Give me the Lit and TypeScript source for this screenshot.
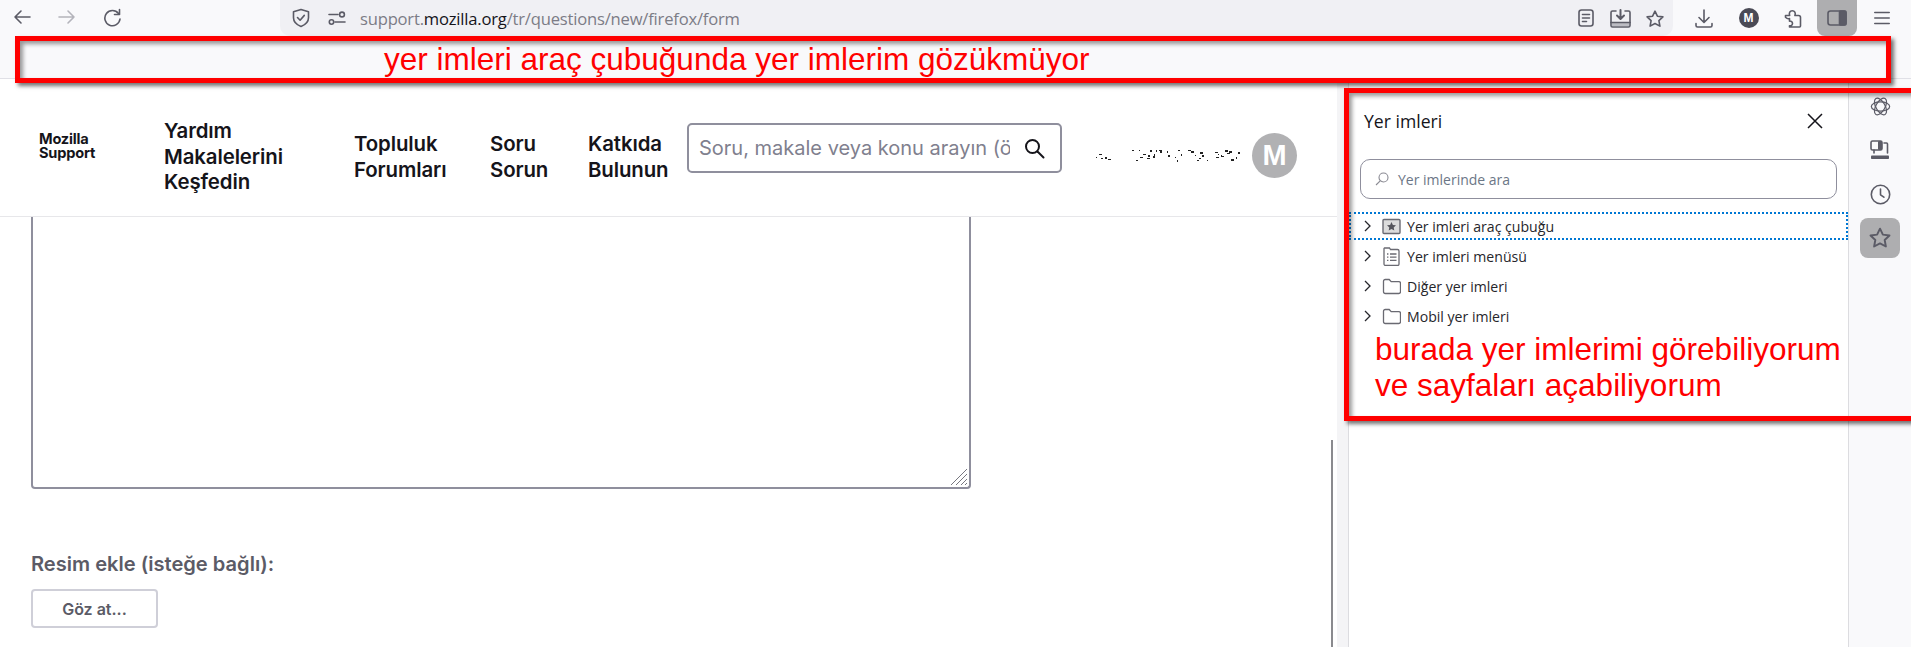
import { LitElement, html, css, svg } from "lit";
import { customElement } from "lit/decorators.js";

const ic = "fill:none;stroke:currentColor;stroke-width:1.6;stroke-linecap:round;stroke-linejoin:round";
const icon = (w: number, h: number, vb: string, body: unknown) =>
  html`<svg width=${w} height=${h} viewBox=${vb} style=${ic}>${body}</svg>`;

const STAR = "M10 2.2l2.4 5 5.5.7-4 3.8 1 5.4-4.9-2.6-4.9 2.6 1-5.4-4-3.8 5.5-.7z";
const FOLDER = "M1.5 4.2a1.7 1.7 0 0 1 1.7-1.7h4l2 2.2h7.6a1.7 1.7 0 0 1 1.7 1.7v8.4a1.7 1.7 0 0 1-1.7 1.7H3.2a1.7 1.7 0 0 1-1.7-1.7z";

const specks: [number, number, number, number][] = (() => {
  const out: [number, number, number, number][] = [];
  let s = 7;
  const r = () => ((s = (s * 137 + 59) % 1009) / 1009);
  for (let x = 0; x < 148; x += 2) {
    if (x > 16 && x < 40) continue;
    if (r() < 0.35) continue;
    out.push([x + Math.floor(r() * 2), 2 + Math.floor(r() * 11), 1 + Math.floor(r() * 3), 1 + Math.floor(r() * 2)]);
  }
  return out;
})();

@customElement("app-root")
export class AppRoot extends LitElement {
  static styles = css`
    :host { display: block; width: 1911px; height: 647px; overflow: hidden; position: relative; background: #fff; font-family: "Inter", "Liberation Sans", sans-serif; }
    .toolbar { height: 78px; background: #f9f9fb; border-bottom: 1px solid #e0e0e6; box-sizing: content-box; color: #5b5b66; }
    .navrow { height: 36px; display: flex; align-items: stretch; }
    .navbtns { width: 280px; display: flex; align-items: center; padding: 0 0 2px 13px; gap: 27px; box-sizing: border-box; }
    .navbtns svg { display: block; }
    .muted { color: #b4b4bb; }
    .urlbar { width: 1393px; background: #f0f0f4; border-radius: 0 0 10px 10px; display: flex; align-items: center; padding-left: 12px; box-sizing: border-box; }
    .perm { margin-left: 18px; display: flex; }
    .url { margin-left: 14px; font-family: "Open Sans", sans-serif; font-size: 16.6px; letter-spacing: -0.2px; color: #7c7c86; white-space: nowrap; }
    .url b { font-weight: 400; color: #15141a; }
    .urlicons { margin-left: auto; display: flex; align-items: center; gap: 14px; padding-right: 8px; }
    .reader { display: flex; margin-right: 2px; }
    .tools { flex: 1; display: flex; align-items: center; padding-left: 8px; }
    .tool { width: 45px; display: flex; justify-content: center; align-items: center; height: 36px; }
    .tool.puzzle { width: 43px; }
    .tool.active { width: 40px; margin: 0 3px; background: #aeaeb0; border-radius: 0 0 8px 8px; }
    .tool.menu { margin-left: 0; width: 44px; }
    .acct { width: 20px; height: 20px; border-radius: 50%; background: #4a4a55; color: #fff; font: 700 12px "Liberation Sans", sans-serif; display: flex; align-items: center; justify-content: center; }

    .body { display: flex; height: 568px; }
    .page { width: 1337px; flex: none; position: relative; }
    .head { height: 137px; border-bottom: 1px solid #e7e7ea; display: grid; grid-template-columns: 125px 190px 136px 98px 99px 375px 1fr; padding-left: 39px; box-sizing: content-box; align-items: start; }
    .logo { margin-top: 53px; font: 700 14.6px/14px "Inter", sans-serif; color: #15141a; letter-spacing: -0.2px; }
    .nav { font-size: 20.4px; line-height: 25.5px; font-weight: 600; color: #15141a; height: 77px; display: flex; align-items: center; margin-top: 39px; letter-spacing: -0.1px; }
    .search { margin-top: 44px; height: 50px; border: 2px solid #8f8f9d; border-radius: 5px; box-sizing: border-box; display: flex; align-items: center; padding: 0 15px 0 10px; color: #15141a; }
    .ph { width: 311px; overflow: hidden; white-space: nowrap; font-size: 20px; color: #80808e; }
    .search svg { margin-left: auto; }
    .user { display: flex; align-items: flex-start; margin-top: 54px; padding-left: 30px; }
    .blur { margin-top: 15px; display: block; }
    .avatar { margin-left: 12px; width: 45px; height: 45px; border-radius: 50%; background: #b1b1b3; color: #fff; font: 700 29px "Liberation Sans", sans-serif; display: flex; align-items: center; justify-content: center; }
    .content { padding-left: 31px; height: 430px; position: relative; }
    .ta { width: 940px; height: 272px; box-sizing: border-box; border: 2px solid #8f8f9d; border-top: none; border-radius: 0 0 4px 4px; display: flex; align-items: flex-end; justify-content: flex-end; padding: 0 1px 1px 0; }
    .ta svg { display: block; }
    .label { margin-top: 63px; font-size: 20.1px; line-height: 24px; font-weight: 600; color: #5b5b66; }
    .btn { margin-top: 13px; width: 127px; height: 39px; box-sizing: border-box; border: 2px solid #cfcfd8; border-radius: 4px; display: flex; align-items: center; justify-content: center; font-size: 16px; font-weight: 600; color: #5b5b66; }
    .scroll { position: absolute; left: 1331px; top: 361px; bottom: 0; width: 2px; background: #8a8a8e; }

    .gutter { width: 11px; flex: none; background: #f4f4f6; border-right: 1px solid #dcdce0; }
    .side { width: 499px; flex: none; background: #fff; font-family: "Open Sans", sans-serif; color: #15141a; position: relative; padding-top: 11px; box-sizing: border-box; }
    .stitle { display: flex; align-items: center; justify-content: space-between; height: 61px; padding: 0 25px 0 15px; font-size: 17.6px; font-weight: 500; box-sizing: border-box; }
    .sbox { margin: 8px 11px 0 11px; height: 40px; border: 1px solid #8f8f9d; border-radius: 10px; display: flex; align-items: center; padding-left: 14px; box-sizing: border-box; font-size: 14px; color: #6b7686; gap: 9px; }
    .rows { margin-top: 13px; }
    .row { height: 30px; display: flex; align-items: center; font-size: 14.1px; padding-left: 15px; box-sizing: border-box; color: #26262b; }
    .row.first { height: 28px; margin-bottom: 1px; outline: 2px dotted #0078d4; outline-offset: -2px; }
    .row .chev { width: 18px; display: block; }
    .row .ico { width: 19px; height: 19px; margin-right: 6px; color: #6a6a72; display: block; }
    .note { margin: 0 0 0 26px; font: 31.5px/36px "Liberation Sans", sans-serif; color: #ff0000; white-space: nowrap; }
    .strip { width: 63px; flex: none; background: #f9f9fb; border-left: 1px solid #dcdce0; box-sizing: border-box; display: flex; flex-direction: column; align-items: center; color: #5b5b66; padding-top: 7px; }
    .sb { width: 40px; height: 40px; margin-bottom: 4px; display: flex; align-items: center; justify-content: center; }
    .sb.active { background: #aeaeb0; border-radius: 8px; }

    .mark { position: absolute; box-sizing: border-box; border: 5px solid #ff0000; box-shadow: 3px 3px 4px rgba(0,0,0,.55), inset 3px 3px 4px rgba(0,0,0,.4); pointer-events: none; }
    .m1 { left: 15px; top: 36px; width: 1876px; height: 47px; font: 31.5px/36px "Liberation Sans", sans-serif; color: #ff0000; padding-left: 364px; white-space: nowrap; }
    .m2 { left: 1344px; top: 88px; width: 575px; height: 333px; }
  `;

  render() {
    return html`
      <div class="toolbar">
        <div class="navrow">
          <div class="navbtns">
            ${icon(18, 16, "0 0 18 16", svg`<path d="M17 8H2M8 2L2 8l6 6"/>`)}
            <span class="muted">${icon(18, 16, "0 0 18 16", svg`<path d="M1 8h15M10 2l6 6-6 6"/>`)}</span>
            ${icon(19, 19, "0 0 19 19", svg`<path d="M15.5 5.5A7.6 7.6 0 1 0 17 11"/><path d="M16.5 1.5v5h-5" />`)}
          </div>
          <div class="urlbar">
            ${icon(18, 20, "0 0 18 20", svg`<path d="M9 1.5l7.5 2.3v6c0 4.2-3.2 7-7.5 8.7-4.3-1.7-7.5-4.5-7.5-8.7v-6z"/><path d="M5.5 9.5l2.6 2.7 4.2-4.8"/>`)}
            <span class="perm">${icon(18, 14, "0 0 18 14", svg`<path d="M1 3.5h9M7 11h10"/><circle cx="14" cy="3.5" r="2.4"/><circle cx="3.5" cy="11" r="2.2" />`)}</span>
            <span class="url">support.<b>mozilla.org</b>/tr/questions/new/firefox/form</span>
            <div class="urlicons">
              <span class="reader">${icon(16, 18, "0 0 16 18", svg`<rect x="1" y="1" width="14" height="16" rx="2.5"/><path d="M4.5 5.5h7M4.5 9h7M4.5 12.5h4"/>`)}</span>
              ${icon(21, 19, "0 0 21 19", svg`<path d="M6 2H2.5A1.5 1.5 0 0 0 1 3.5v13A1.5 1.5 0 0 0 2.5 18h16a1.5 1.5 0 0 0 1.5-1.5v-13A1.5 1.5 0 0 0 18.5 2H15"/><path d="M1 13.5h19" /><path d="M10.5 1v8M7 6.5l3.5 3.5L14 6.5" style="stroke-width:2"/><rect x="2" y="14" width="17" height="3" style="fill:currentColor;stroke:none;opacity:.35"/>`)}
              ${icon(20, 19, "0 0 20 19", svg`<path d=${STAR}/>`)}
            </div>
          </div>
          <div class="tools">
            <div class="tool">${icon(18, 19, "0 0 18 19", svg`<path d="M9 1v12M4 8.5L9 13.5l5-5M1 14.5v2a1.5 1.5 0 0 0 1.5 1.5h13a1.5 1.5 0 0 0 1.5-1.5v-2"/>`)}</div>
            <div class="tool"><span class="acct">M</span></div>
            <div class="tool puzzle">${icon(18, 19, "0 0 18 19", svg`<path d="M1.5 8.2V6.5h4.2c-1-2.5.2-4.8 2.6-4.8s3.6 2.3 2.6 4.8h3.6a2 2 0 0 1 2 2V17a1 1 0 0 1-1 1H5.5v-1.2c1.6.2 3-.8 3-2.3s-1.4-2.6-3-2.4V9.5c-1.2.5-2.6.2-4-1.3z"/>`)}</div>
            <div class="tool active">${icon(20, 16, "0 0 20 16", svg`<rect x="1" y="1" width="18" height="14" rx="2.5"/><rect x="12.5" y="1" width="6.5" height="14" rx="1" style="fill:currentColor"/>`)}</div>
            <div class="tool menu">${icon(16, 14, "0 0 16 14", svg`<path d="M.8 1.5h14.4M.8 7h14.4M.8 12.5h14.4"/>`)}</div>
          </div>
        </div>
      </div>

      <div class="body">
        <div class="page">
          <div class="head">
            <div class="logo">Mozilla<br />Support</div>
            <div class="nav"><span>Yardım<br />Makalelerini<br />Keşfedin</span></div>
            <div class="nav"><span>Topluluk<br />Forumları</span></div>
            <div class="nav"><span>Soru<br />Sorun</span></div>
            <div class="nav"><span>Katkıda<br />Bulunun</span></div>
            <div class="search">
              <span class="ph">Soru, makale veya konu arayın (ö</span>
              <svg width="21" height="21" viewBox="0 0 21 21" style="fill:none;stroke:currentColor;stroke-width:2;stroke-linecap:round"><circle cx="8.5" cy="8.5" r="6.5"/><path d="M13.5 13.5l6 6"/></svg>
            </div>
            <div class="user">
              <svg class="blur" width="148" height="16" viewBox="0 0 148 16">
                ${specks.map(([x, y, w, h]) => svg`<rect x=${x} y=${y} width=${w} height=${h} fill="#222"/>`)}
              </svg>
              <div class="avatar">M</div>
            </div>
          </div>
          <div class="content">
            <div class="ta">
              <svg width="18" height="18" viewBox="0 0 18 18" style="stroke:#77777f;stroke-width:1;fill:none"><path d="M1 17L17 1M6 17L17 6M11 17l6-6M15 17l2-2"/></svg>
            </div>
            <div class="label">Resim ekle (isteğe bağlı):</div>
            <div class="btn">Göz at...</div>
          </div>
          <div class="scroll"></div>
        </div>
        <div class="gutter"></div>
        <div class="side">
          <div class="stitle">
            <span>Yer imleri</span>
            <svg width="16" height="16" viewBox="0 0 16 16" style="stroke:#15141a;stroke-width:1.5;fill:none"><path d="M1 1l14 14M15 1L1 15"/></svg>
          </div>
          <div class="sbox">
            <svg width="14" height="14" viewBox="0 0 14 14" style="stroke:#8a8a93;stroke-width:1.1;fill:none"><circle cx="8.5" cy="5.5" r="4.5"/><path d="M5.2 8.8L1 13"/></svg>
            <span>Yer imlerinde ara</span>
          </div>
          <div class="rows">
            ${this.row("Yer imleri araç çubuğu", svg`<rect x="1" y="2.5" width="17" height="14" rx="1" fill="#dcdcdc" stroke="currentColor" stroke-width="1.4"/><path d="M9.5 5l1.4 2.9 3.1.4-2.3 2.2.6 3.1-2.8-1.5-2.8 1.5.6-3.1-2.3-2.2 3.1-.4z" fill="#55555c"/>`, true)}
            ${this.row("Yer imleri menüsü", svg`<path d="M2.5 1h5l1 1.5h7a1.5 1.5 0 0 1 1.5 1.5v13a1.5 1.5 0 0 1-1.5 1.5h-12A1.5 1.5 0 0 1 2 17V1.5z" fill="none" stroke="currentColor" stroke-width="1.3"/><path d="M5 7h1.4M8 7h6.5M5 10.2h1.4M8 10.2h6.5M5 13.4h1.4M8 13.4h6.5" stroke="currentColor" stroke-width="1.3"/>`)}
            ${this.row("Diğer yer imleri", svg`<path d=${FOLDER} fill="none" stroke="currentColor" stroke-width="1.3"/>`)}
            ${this.row("Mobil yer imleri", svg`<path d=${FOLDER} fill="none" stroke="currentColor" stroke-width="1.3"/>`)}
          </div>
          <div class="note">burada yer imlerimi görebiliyorum<br />ve sayfaları açabiliyorum</div>
        </div>
        <div class="strip">
          <div class="sb">
            <svg width="21" height="21" viewBox="0 0 22 22" style="fill:none;stroke:currentColor;stroke-width:1.3">
              <ellipse cx="11" cy="11" rx="9.6" ry="4.8"/><ellipse cx="11" cy="11" rx="9.6" ry="4.8" transform="rotate(60 11 11)"/><ellipse cx="11" cy="11" rx="9.6" ry="4.8" transform="rotate(120 11 11)"/>
            </svg>
          </div>
          <div class="sb">
            ${icon(20, 20, "0 0 20 20", svg`<rect x="1" y="1" width="11" height="9" rx="1.5"/><rect x="8" y="1" width="4" height="9" rx="1" style="fill:currentColor;stroke:none"/><path d="M14 3h2.5a1 1 0 0 1 1 1v9M4 10v3"/><rect x="1" y="15.5" width="18" height="3.5" rx=".8" style="fill:currentColor;stroke:none"/>`)}
          </div>
          <div class="sb">
            ${icon(21, 21, "0 0 21 21", svg`<circle cx="10.5" cy="10.5" r="9.2"/><path d="M10.5 5v5.8l3.4 2.4"/>`)}
          </div>
          <div class="sb active">
            ${icon(24, 24, "0 0 20 20", svg`<path d=${STAR}/>`)}
          </div>
        </div>
      </div>

      <div class="mark m1">yer imleri araç çubuğunda yer imlerim gözükmüyor</div>
      <div class="mark m2"></div>
    `;
  }

  row(label: string, ico: unknown, first = false) {
    return html`<div class="row ${first ? "first" : ""}">
      <svg class="chev" width="8" height="12" viewBox="0 0 18 12" style="fill:none;stroke:#26262b;stroke-width:1.3"><path d="M1 1l5 5-5 5"/></svg>
      <svg class="ico" viewBox="0 0 19 19">${ico}</svg>
      <span>${label}</span>
    </div>`;
  }
}
